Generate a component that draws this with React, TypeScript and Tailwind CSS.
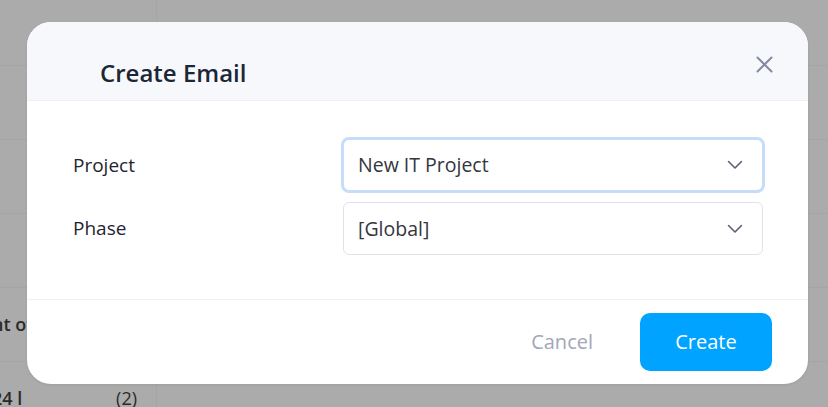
import React from "react";

const font = { fontFamily: '"Open Sans", "Noto Sans", sans-serif' };

function Chevron() {
  return (
    <svg width="16" height="10" viewBox="0 0 16 10" fill="none">
      <path d="M1.5 1.5 L8 8 L14.5 1.5" stroke="#5b6271" strokeWidth="1.6" strokeLinecap="round" strokeLinejoin="round" />
    </svg>
  );
}

export default function App() {
  const rows = [
    { left: "", right: "(1)" },
    { left: "", right: "" },
    { left: "", right: "" },
    { left: "", right: "" },
    { left: "nt of", right: "" },
    { left: "24 l", right: "(2)" },
  ];
  return (
    <div className="relative w-[828px] h-[407px] overflow-hidden bg-[#ababab]" style={font}>
      <div className="flex flex-col -mt-[8px]">
        {rows.map((r, i) => (
          <div key={i} className="flex h-[74px] border-b border-[#a5a5a5]">
            <div className="w-[157px] shrink-0 flex items-center border-r border-[#a5a5a5]">
              <span className="flex-1 -ml-[8px] text-[18px] font-semibold text-[#2a2a2a]">{r.left}</span>
              <span className="pr-[19px] text-[18px] text-[#2a2a2a]">{r.right}</span>
            </div>
            <div className="flex-1" />
          </div>
        ))}
      </div>

      <div className="absolute left-[27px] top-[22px] w-[781px] h-[362px] rounded-[24px] bg-white overflow-hidden flex flex-col shadow-[0_1px_3px_rgba(0,0,0,0.08)]">
        <div className="h-[79px] shrink-0 bg-[#f7f8fc] flex items-center justify-between pl-[73px] pr-[34px] border-b border-[#eef0f4]">
          <h2 className="text-[24px] font-semibold text-[#1b2636] mt-[23px]">Create Email</h2>
          <button className="w-[20px] h-[20px] flex items-center justify-center mt-[7px]">
            <svg width="17" height="17" viewBox="0 0 17 17" fill="none">
              <path d="M1.5 1.5 L15.5 15.5 M15.5 1.5 L1.5 15.5" stroke="#858aa3" strokeWidth="2" strokeLinecap="round" />
            </svg>
          </button>
        </div>

        <div className="flex-1 flex flex-col gap-[9px] pt-[36px] pl-[46px] pr-[43px]">
          <div className="flex items-center">
            <label className="w-[268px] text-[19px] text-[#1f2430]">Project</label>
            <div className="flex-1 h-[56px] rounded-[8px] border-[3px] border-[#c6ddf9] bg-white flex items-center justify-between pl-[14px] pr-[19px]">
              <span className="text-[19.5px] text-[#333640]">New IT Project</span>
              <Chevron />
            </div>
          </div>
          <div className="flex items-center">
            <label className="w-[270px] text-[19px] text-[#1f2430]">Phase</label>
            <div className="flex-1 mr-[2px] h-[53px] rounded-[6px] border border-[#e0e2e8] bg-white flex items-center justify-between pl-[14px] pr-[19px]">
              <span className="text-[19.5px] text-[#333640]">[Global]</span>
              <Chevron />
            </div>
          </div>
        </div>

        <div className="h-[85px] shrink-0 border-t border-[#f0f1f4] flex items-center justify-end gap-[47px] pr-[36px]">
          <button className="text-[20px] text-[#a3a6b6]">Cancel</button>
          <button className="w-[132px] h-[58px] rounded-[10px] bg-[#00a3ff] text-white text-[20px] font-medium">Create</button>
        </div>
      </div>
    </div>
  );
}
